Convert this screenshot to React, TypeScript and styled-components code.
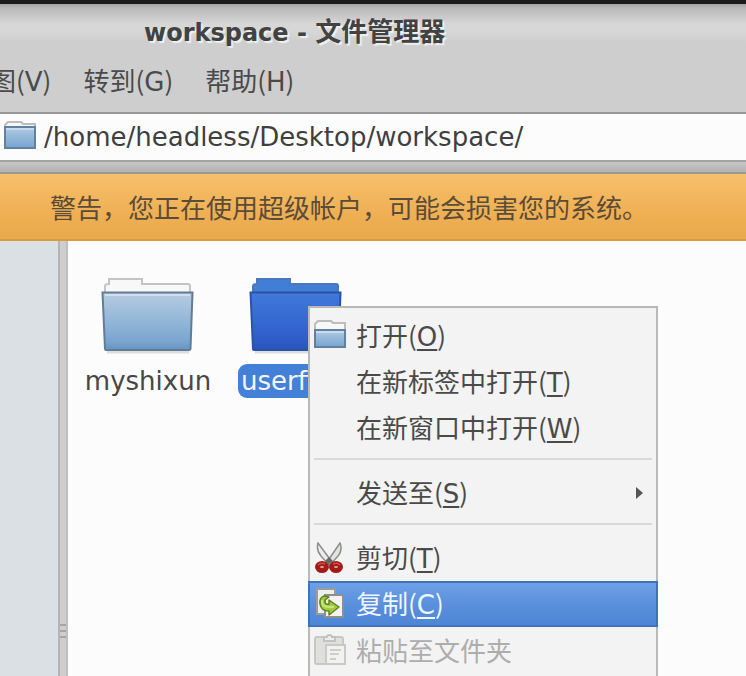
import React from "react";
import styled, { createGlobalStyle, css } from "styled-components";

const cjk = '"Noto Sans CJK SC", "DejaVu Sans", sans-serif';
const latin = '"DejaVu Sans", "Noto Sans CJK SC", sans-serif';

const GlobalStyle = createGlobalStyle`
  * { box-sizing: border-box; }
  body {
    margin: 0;
    overflow: hidden;
    background: #fcfcfc;
    color: #4a4a4a;
    font: 26px/46px ${cjk};
  }
  button { font: inherit; color: inherit; border: 0; margin: 0; background: none; }
`;

const Window = styled.div`
  display: flex;
  flex-direction: column;
  height: 100vh;
  overflow: hidden;
`;

const Header = styled.header`
  border-top: 4px solid #1c1c1c;
  background: linear-gradient(#a2a2a2, #b9b9b9 4px, #d7d7d7 20px, #d6d6d6 28px, #cecece 38px);
`;

const Title = styled.h1`
  margin: 0;
  padding: 4px 0 2px 144px;
  font: bold 24px/44px ${latin};
  color: #424242;
  text-shadow: 2px 2px 1px #f0f0f0;
  white-space: nowrap;
`;

const TitleName = styled.span`
  font: bold 26px/44px ${cjk};
`;

const MenuBar = styled.nav`
  display: flex;
  gap: 32px;
  margin-left: -10px;
  padding-bottom: 7px;
`;

const MenuBarItem = styled.button`
  padding: 0;
  white-space: nowrap;
`;

const Mnemonic = styled.span<{ $underlined?: boolean }>`
  font-family: ${latin};
  ${({ $underlined }) =>
    $underlined &&
    css`
      text-decoration: underline;
      text-decoration-thickness: 2px;
      text-underline-offset: 3px;
    `}
`;

const LocationBar = styled.label`
  display: flex;
  align-items: center;
  gap: 8px;
  height: 50px;
  padding-left: 4px;
  border-top: 2px solid #969696;
  border-bottom: 2px solid #a3a3a3;
  background: #fcfcfc;
`;

const LocationInput = styled.input`
  flex: 1;
  min-width: 0;
  padding: 0;
  border: 0;
  outline: 0;
  background: none;
  color: #3f3f3f;
  font: 26px/40px ${latin};
`;

const Strip = styled.div`
  height: 12px;
  border-bottom: 2px solid #999;
  background: linear-gradient(#c6c6c6, #b3b3b3);
`;

const Warning = styled.div`
  padding: 10px 0 9px 50px;
  border-bottom: 2px solid #d89b42;
  background: linear-gradient(#f6c06a, #efb055 60%, #e9a84b);
  color: #5b4c37;
  line-height: 46px;
  white-space: nowrap;
`;

const Body = styled.div`
  display: flex;
  flex: 1;
  min-height: 0;
`;

const Sidebar = styled.aside`
  flex: 0 0 58px;
  background: #dae0e4;
`;

const Splitter = styled.div`
  display: flex;
  flex: 0 0 10px;
  flex-direction: column;
  align-items: center;
  justify-content: flex-end;
  gap: 4px;
  padding-bottom: 38px;
  border-left: 2px solid #b4b4b4;
  border-right: 2px solid #bfbfbf;
  background: #cecece;
`;

const Grip = styled.span`
  width: 6px;
  height: 2px;
  background: #a5a5a5;
`;

const Files = styled.main`
  position: relative;
  display: flex;
  flex: 1;
  align-items: flex-start;
  padding: 34px 6px;
  background: #fcfcfc;
`;

const File = styled.button`
  display: flex;
  flex-direction: column;
  align-items: center;
  gap: 9px;
  width: 148px;
  padding: 0;
`;

const FileLabel = styled.span<{ $selected?: boolean }>`
  padding: 0 3px;
  border-radius: 9px;
  font: 26px/34px ${latin};
  color: ${({ $selected }) => ($selected ? "#f2f6fc" : "#474747")};
  background: ${({ $selected }) => ($selected ? "#447fd8" : "none")};
`;

const ContextMenu = styled.div`
  position: absolute;
  top: 65px;
  bottom: 0;
  left: 240px;
  width: 350px;
  padding-top: 5px;
  border: 2px solid #b9b9b9;
  border-bottom: 0;
  background: #f3f3f3;
`;

const MenuItem = styled.button<{ $active?: boolean }>`
  display: flex;
  align-items: center;
  width: calc(100% + 4px);
  height: 46px;
  margin: 0 -2px;
  padding: 0 14px 0 6px;
  text-align: left;
  white-space: nowrap;
  &:disabled { color: #adadad; }
  ${({ $active }) =>
    $active &&
    css`
      color: #f1f6fd;
      background: linear-gradient(#6fa2e8, #5a90dd 50%, #4c85d5);
      box-shadow: inset 0 0 0 2px #3f74bd;
    `}
`;

const IconSlot = styled.span`
  display: flex;
  flex: 0 0 42px;
`;

const Label = styled.span`
  flex: 1;
`;

const Separator = styled.hr`
  height: 2px;
  margin: 7px 4px 10px;
  border: 0;
  background: #d9d9d9;
`;

const Icon = styled.svg`
  display: block;
  flex: none;
`;

function LargeFolder({ selected }: { selected?: boolean }) {
  const id = selected ? "folderSelected" : "folderPlain";
  return (
    <Icon width="94" height="80" viewBox="0 0 94 80" aria-hidden="true">
      <defs>
        <linearGradient id={id} x1="0" y1="0" x2="0" y2="1">
          <stop offset="0" stopColor={selected ? "#4079d9" : "#b7cce1"} />
          <stop offset=".55" stopColor={selected ? "#3467d2" : "#8fb4d6"} />
          <stop offset=".85" stopColor={selected ? "#2d5bc7" : "#7aa5cf"} />
          <stop offset="1" stopColor={selected ? "#2955b7" : "#6694c0"} />
        </linearGradient>
      </defs>
      <path d="M6 77H88" stroke="#000" strokeOpacity=".12" strokeWidth="3" />
      <path
        d="M4 22V11Q4 9 8 9V4H41V9H87Q89 9 89 11V22Z"
        fill={selected ? "#427dd6" : "#f8f8f8"}
        stroke={selected ? "#4a78ba" : "#c4c4c4"}
        strokeWidth="2"
      />
      <path
        d="M1.5 17.5H91.5L89.5 74Q89.5 75 88 75H5Q4 75 4 74Z"
        fill={`url(#${id})`}
        stroke={selected ? "#2953a4" : "#637c95"}
        strokeWidth="2"
      />
      <path
        d="M4 20H89"
        stroke={selected ? "#4279d9" : "#d1dfed"}
        strokeWidth="2"
      />
    </Icon>
  );
}

function SmallFolder({ open }: { open?: boolean }) {
  const top = open ? 11 : 7;
  return (
    <Icon width="32" height="34" viewBox="0 0 32 34" aria-hidden="true">
      <defs>
        <linearGradient id="smallFolder" x1="0" y1="0" x2="0" y2="1">
          <stop offset="0" stopColor="#b1cbe2" />
          <stop offset="1" stopColor="#75a4d0" />
        </linearGradient>
      </defs>
      <path d="M1 13V5L4 2H17L19 4H31V13Z" fill="#f8f8f8" stroke="#bcbcbc" strokeWidth="2" />
      <path
        d={`M1 ${top}H31V28H1Z`}
        fill="url(#smallFolder)"
        stroke="#61819e"
        strokeWidth="2"
      />
      <path d={`M2 ${top + 2}H30`} stroke="#c9dced" strokeWidth="2" />
    </Icon>
  );
}

function CutIcon() {
  return (
    <Icon width="32" height="32" viewBox="0 0 32 32" aria-hidden="true">
      <path d="M4 1Q2 8 7 14L15 23L18 20Z" fill="#ecedeb" stroke="#8c8e8b" strokeWidth="1.5" />
      <path d="M26 1Q29 8 24 14L16 23L13 20Z" fill="#e1e3df" stroke="#8c8e8b" strokeWidth="1.5" />
      <path d="M15 15L19 19L15 22L11 19Z" fill="#666" />
      <ellipse cx="8" cy="25" rx="4.5" ry="3.5" fill="#d9aaa5" stroke="#a31b17" strokeWidth="5" />
      <ellipse cx="22" cy="25" rx="4.5" ry="3.5" fill="#d9aaa5" stroke="#a31b17" strokeWidth="5" />
      <path d="M4 23Q7 20 11 22M19 22Q23 20 26 23" fill="none" stroke="#cf4d48" strokeWidth="1.5" />
    </Icon>
  );
}

function CopyIcon() {
  return (
    <Icon width="32" height="32" viewBox="0 2 32 32" aria-hidden="true">
      <path d="M3 3H21V28H3Z" fill="#eeeeec" stroke="#9b9d99" strokeWidth="2" />
      <path d="M11 9H29V31H11Z" fill="#f3f3f1" stroke="#8d908b" strokeWidth="2" />
      <path
        d="M10 10Q5 12 6 18Q7 25 15 25V29L25 21L15 14V18Q10 19 11 14L15 11Z"
        fill="#a2cb42"
        stroke="#5d8420"
        strokeWidth="1.5"
        strokeLinejoin="round"
      />
      <path d="M8 14Q7 21 15 21H20" fill="none" stroke="#c8e677" strokeWidth="2" />
    </Icon>
  );
}

function PasteIcon() {
  return (
    <Icon width="32" height="32" viewBox="0 0 32 32" aria-hidden="true">
      <rect x="1" y="3" width="28" height="27" rx="2" fill="#dfdfdd" stroke="#c7c7c5" strokeWidth="2" />
      <path d="M10 7V3H13Q13 1 15 1Q18 1 18 3H21V7Z" fill="#eee" stroke="#c2c2c0" strokeWidth="2" />
      <path d="M12 11H31V30H12Z" fill="#f2f2f1" stroke="#c9c9c8" strokeWidth="2" />
      <path d="M16 16H27M16 20H25M16 25H22" stroke="#cdcdcd" strokeWidth="2" />
    </Icon>
  );
}

type EntryProps = {
  icon?: React.ReactNode;
  text: string;
  letter?: string;
  active?: boolean;
  disabled?: boolean;
  submenu?: boolean;
};

function Entry({ icon, text, letter, active, disabled, submenu }: EntryProps) {
  return (
    <MenuItem type="button" role="menuitem" $active={active} disabled={disabled} aria-haspopup={submenu}>
      <IconSlot>{icon}</IconSlot>
      <Label>
        {text}
        {letter && <>(<Mnemonic $underlined>{letter}</Mnemonic>)</>}
      </Label>
      {submenu && (
        <Icon width="8" height="14" viewBox="0 0 8 14" aria-hidden="true">
          <path d="M0 1L7 7L0 13Z" fill="#555" />
        </Icon>
      )}
    </MenuItem>
  );
}

const bar = [
  ["图", "V"],
  ["转到", "G"],
  ["帮助", "H"],
];

export default function App() {
  return (
    <Window>
      <GlobalStyle />
      <Header>
        <Title>workspace - <TitleName>文件管理器</TitleName></Title>
        <MenuBar>
          {bar.map(([text, letter]) => (
            <MenuBarItem type="button" key={letter}>
              {text}(<Mnemonic>{letter}</Mnemonic>)
            </MenuBarItem>
          ))}
        </MenuBar>
      </Header>
      <LocationBar>
        <SmallFolder />
        <LocationInput aria-label="Location" defaultValue="/home/headless/Desktop/workspace/" />
      </LocationBar>
      <Strip />
      <Warning role="alert">警告，您正在使用超级帐户，可能会损害您的系统。</Warning>
      <Body>
        <Sidebar />
        <Splitter><Grip /><Grip /><Grip /></Splitter>
        <Files>
          <File type="button">
            <LargeFolder />
            <FileLabel>myshixun</FileLabel>
          </File>
          <File type="button">
            <LargeFolder selected />
            <FileLabel $selected>userfiles</FileLabel>
          </File>
          <ContextMenu role="menu">
            <Entry icon={<SmallFolder open />} text="打开" letter="O" />
            <Entry text="在新标签中打开" letter="T" />
            <Entry text="在新窗口中打开" letter="W" />
            <Separator />
            <Entry text="发送至" letter="S" submenu />
            <Separator />
            <Entry icon={<CutIcon />} text="剪切" letter="T" />
            <Entry icon={<CopyIcon />} text="复制" letter="C" active />
            <Entry icon={<PasteIcon />} text="粘贴至文件夹" disabled />
          </ContextMenu>
        </Files>
      </Body>
    </Window>
  );
}
